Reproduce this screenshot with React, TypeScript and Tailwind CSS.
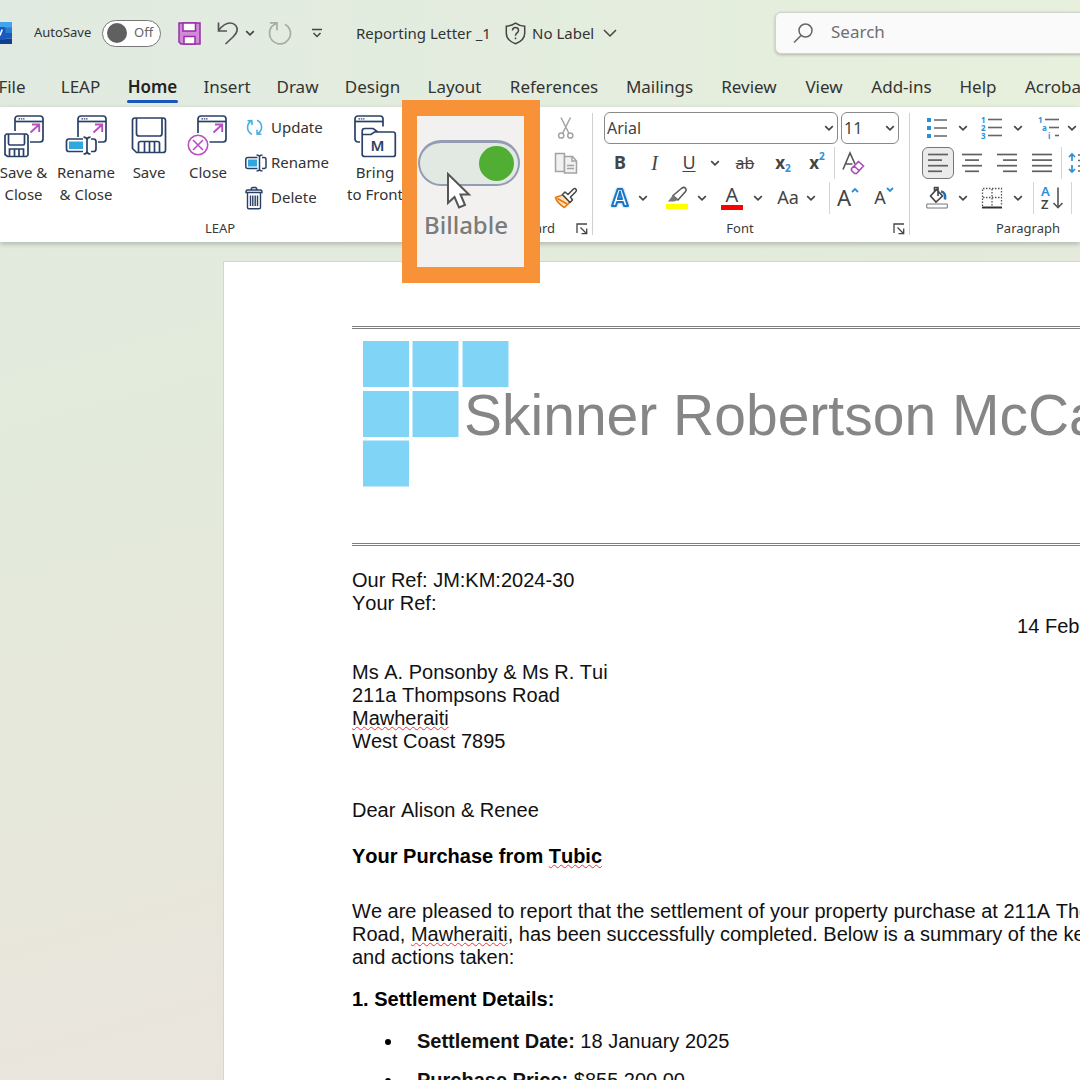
import type { ReactNode } from 'react';

// Ribbon tabs, in the order they are drawn
const tabs = [
  { name: 'LEAP', width: 'w-[41px]' },
  { name: 'Home', width: 'w-[51px]' },
  { name: 'Insert', width: 'w-[46px]' },
  { name: 'Draw', width: 'w-[43px]' },
  { name: 'Design', width: 'w-[55px]' },
  { name: 'Layout', width: 'w-[57px]' },
  { name: 'References', width: 'w-[90px]' },
  { name: 'Mailings', width: 'w-[69px]' },
  { name: 'Review', width: 'w-[58px]' },
  { name: 'View', width: 'w-[40px]' },
  { name: 'Add-ins', width: 'w-[63px]' },
  { name: 'Help', width: 'w-[38px]' },
  { name: 'Acrobat', width: 'w-[66px]' },
];

/* ---------- shared bits ---------- */

function Chevron({ size = 10 }: { size?: number }) {
  return (
    <svg width={size} height={size} viewBox="0 0 10 10" fill="none" stroke="#444" strokeWidth="1.7" className="pointer-events-none shrink-0">
      <path d="M1.2 3.2 5 6.8l3.8-3.6" />
    </svg>
  );
}

function Tool({ label, className = '', children }: { label: string; className?: string; children: ReactNode }) {
  return (
    <button aria-label={label} className={`flex h-8 shrink-0 items-center justify-center ${className}`}>
      {children}
    </button>
  );
}

function Row({ children }: { children: ReactNode }) {
  return <div className="flex h-[35px] items-center">{children}</div>;
}

function RowDivider({ className = '' }: { className?: string }) {
  return <span className={`h-8 w-px shrink-0 bg-[#d4d4d4] ${className}`} />;
}

function GroupDivider() {
  return <span className="mt-[3px] h-[122px] w-px shrink-0 bg-[#d0d0d0]" />;
}

function GroupLabel({ children, launcher = false }: { children: ReactNode; launcher?: boolean }) {
  return (
    <div className="flex h-[27px] items-center text-[13px] text-[#3a3a3a]">
      <span className={launcher ? 'grow pr-[6px] text-center' : 'grow text-center'}>{children}</span>
      {launcher && (
        <button aria-label={`${children} settings`} className="mr-1">
          <svg width="12" height="12" viewBox="0 0 12 12" fill="none" stroke="#444" strokeWidth="1.3">
            <path d="M1 10V1h10M4.500 4.500l6 6M10.700 5.500v5.200H5.500" />
          </svg>
        </button>
      )}
    </div>
  );
}

/* ---------- LEAP icons ---------- */

const NAVY = '#2b4066';
const PURPLE = '#b850c4';

function WindowShape({ x, arrow = true }: { x: number; arrow?: boolean }) {
  return (
    <g transform={`translate(${x} 0)`} fill="none" strokeWidth="1.7">
      <rect x="1" y="2" width="28" height="26" rx="3" stroke={NAVY} fill="#fff" />
      <path d="M1 7.500h28" stroke={NAVY} />
      <path d="M4.500 4.900h6" stroke={NAVY} strokeDasharray="1.500 .8" strokeWidth="1.300" />
      {arrow && <path d="M16.500 18.500 25 10.700M18 10.500h7.200v7.500" stroke={PURPLE} strokeWidth="1.900" />}
    </g>
  );
}

function SaveCloseIcon() {
  return (
    <svg width="42" height="44" viewBox="0 0 42 44">
      <WindowShape x={11} />
      <path d="M0 17h27v27H0z" fill="#fff" />
      <g fill="none" stroke={NAVY} strokeWidth="1.7">
        <path d="M3.500 20h20l1.500 1.500v19.500l-1.500 1.500h-19L2 40.500v-19z" />
        <path d="M5.500 20v9.500q0 1.500 1.500 1.500h13q1.500 0 1.500-1.500V20M6.500 42.500v-7.500h14v7.500M11.500 35v7M16 35v7" />
      </g>
    </svg>
  );
}

function RenameCloseIcon() {
  return (
    <svg width="42" height="44" viewBox="0 0 42 44">
      <WindowShape x={12} />
      <path d="M0 23h33v19H0z" fill="#fff" />
      <rect x="4" y="27.500" width="14" height="7.500" fill="#2fa8e0" />
      <g fill="none" stroke={NAVY} strokeWidth="1.7">
        <path d="M18 37.500H4q-2.500 0-2.500-2.500v-7.500Q1.500 25 4 25h14M26 25h2.500q2.500 0 2.500 2.500V35q0 2.500-2.500 2.500H26" />
        <path d="M18.500 23.200q3 0 3.500 2.300.5-2.300 3.500-2.300M22 25v13M18.500 40q3 0 3.500-2.300.5 2.300 3.500 2.300" />
      </g>
    </svg>
  );
}

function SaveIcon() {
  return (
    <svg width="36" height="44" viewBox="0 0 36 44" fill="none" stroke={NAVY} strokeWidth="1.700">
      <path d="M4 4h28q2.500 0 2.500 2.500v29.500q0 2.500-2.500 2.500H5.500L1.500 34.500V6.500Q1.500 4 4 4z" />
      <path d="M5.500 4v15.500q0 2.500 2.500 2.500h20.500q2.500 0 2.500-2.500V4M7.500 38V29.500q0-2 2-2h17q2 0 2 2V38M13.500 28v10M18.500 28v10M23.500 28v10" />
    </svg>
  );
}

function CloseIcon() {
  return (
    <svg width="42" height="44" viewBox="0 0 42 44">
      <WindowShape x={10} />
      <circle cx="11" cy="31" r="12" fill="#fff" />
      <g fill="none" stroke={PURPLE} strokeWidth="1.600">
        <circle cx="11" cy="31" r="9.700" />
        <path d="m6 26 10 10M16 26 6 36" />
      </g>
    </svg>
  );
}

function BringIcon() {
  return (
    <svg width="44" height="44" viewBox="0 0 44 44">
      <WindowShape x={1} arrow={false} />
      <path d="M7 12.500h26v5h11V44H7z" fill="#fff" />
      <path d="M9.200 17q0-2.500 2.500-2.500h8.500l4.500 3.500H40q2.300 0 2.300 2.300V40.500q0 2-2 2H11.500q-2.300 0-2.300-2.300zM9.500 20.500h8.500l3.500-2.500h4" fill="none" stroke={NAVY} strokeWidth="1.700" />
      <text x="24.500" y="37" textAnchor="middle" fontFamily="Noto Sans, sans-serif" fontSize="15" fontWeight="600" fill={NAVY}>M</text>
    </svg>
  );
}

function UpdateIcon() {
  return (
    <svg width="19" height="19" viewBox="0 0 19 19" fill="none" stroke="#45b0e3" strokeWidth="1.600">
      <path d="M7 16.200A7.300 7.300 0 0 1 6.500 3M2.500 2.800l4.300-.2.300 4.400" />
      <path d="M12 2.300a7.300 7.300 0 0 1 .5 13.300M16.500 16l-4.300.2-.3-4.400" />
    </svg>
  );
}

function RenameIcon() {
  return (
    <svg width="22" height="20" viewBox="0 0 22 20">
      <rect x="3" y="6.500" width="9" height="7" fill="#2fa8e0" />
      <path d="M12.500 15.500H3Q.8 15.500.8 13.500v-7Q.8 4.500 3 4.500h9.500M17 4.500h2q2 0 2 2v7q0 2-2 2h-2M11.500 2q2.500 0 3 1.500Q15 2 17.500 2M14.500 3.500v13M11.500 18q2.500 0 3-1.500.5 1.500 3 1.500" fill="none" stroke={NAVY} strokeWidth="1.500" />
    </svg>
  );
}

function DeleteIcon() {
  return (
    <svg width="20" height="24" viewBox="0 0 20 24" fill="none" stroke={NAVY} strokeWidth="1.400">
      <path d="M1 5.500q0-1.500 1.500-1.500h13Q17 4 17 5.500v1H1zM6 4q0-2 1.500-2.500h3Q12 2 12 4M2.500 7v14.500q0 1.200 1.500 1.200h10q1.500 0 1.500-1.200V7" />
      <path d="M5.500 9.500v10.500M7.800 9.500v10.500M10.200 9.500v10.500M12.500 9.500v10.500" />
    </svg>
  );
}

/* ---------- title bar ---------- */

function TitleBar() {
  return (
    <div className="flex h-[66px] items-center text-[#333]">
      <svg width="12" height="22" viewBox="0 0 12 22" className="shrink-0">
        <path d="M0 0h12v6H0z" fill="#41a5ee" />
        <path d="M0 5.500h12v6H0z" fill="#2b7cd3" />
        <path d="M0 11h12v5.500H0z" fill="#185abd" />
        <path d="M0 16.500h12V22H0z" fill="#103f91" />
        <path d="M0 5h4q1.500 0 1.500 1.500v10Q5.500 18 4 18H0z" fill="#185abd" />
        <path d="M0 13.500 2.200 7.500" stroke="#fff" strokeWidth="1.500" />
      </svg>

      <label className="ml-[22px] flex shrink-0 items-center text-[13px]">
        <span className="w-[68px]">AutoSave</span>
        <input type="checkbox" role="switch" className="sr-only" />
        <span className="flex h-[27px] w-[59px] items-center gap-[7px] rounded-full border border-[#777] bg-white pl-1 text-[#666]">
          <span className="size-5 rounded-full bg-[#606060]" />
          Off
        </span>
      </label>

      <button aria-label="Save" className="ml-4 shrink-0">
        <svg width="24" height="24" viewBox="0 0 24 24" stroke="#962ea6" strokeWidth="1.500">
          <path d="M2 2h21v21H4l-2-2z" fill="#d08ad8" />
          <path d="M6 2h12.500v8H6zM7 23v-7.500h11V23z" fill="#fff" />
        </svg>
      </button>
      <button aria-label="Undo" className="ml-4 shrink-0">
        <svg width="22" height="24" viewBox="0 0 22 24" fill="none" stroke="#555" strokeWidth="1.700">
          <path d="M1.500 1.500v8.500h8.500M1.500 9.500C5 5 8.500 2 13 2c5 0 8 4 7 8-.5 2.500-2 4-4 6l-7.500 7" />
        </svg>
      </button>
      <button aria-label="Undo history" className="ml-[6px] shrink-0"><Chevron /></button>
      <button aria-label="Redo" className="ml-[13px] shrink-0">
        <svg width="24" height="24" viewBox="0 0 24 24" fill="none" stroke="#a6ada4" strokeWidth="1.700">
          <path d="M2 1.800h7v7.500M9 2.500C3.500 4 1.500 8 1.500 12.500a10.500 10.500 0 1 0 15.500-9.300" />
        </svg>
      </button>
      <button aria-label="Customise toolbar" className="ml-[19px] shrink-0">
        <svg width="12" height="12" viewBox="0 0 12 12" fill="none" stroke="#444" strokeWidth="1.500">
          <path d="M1 2.500h10M2.500 6l3.500 3.500L9.500 6" />
        </svg>
      </button>

      <span className="ml-[33px] w-[149px] shrink-0 whitespace-nowrap text-[15px]">Reporting Letter _1</span>
      <button className="flex shrink-0 items-center whitespace-nowrap text-[15px]">
        <svg width="21" height="23" viewBox="0 0 21 23" fill="none" stroke="#444" strokeWidth="1.500">
          <path d="M10.500 1.200Q14.500 4 19.700 4.200v7q0 7-9.200 10.600Q1.300 18.200 1.300 11.200v-7Q6.500 4 10.500 1.200z" />
          <path d="M7.500 8.500c0-4 6-4 6 0 0 2.500-3 2.300-3 5.200M10.500 15.500v1.800" />
        </svg>
        <span className="ml-[6px] w-[71px] text-left">No Label</span>
        <svg width="14" height="14" viewBox="0 0 14 14" fill="none" stroke="#444" strokeWidth="1.500">
          <path d="m1 4 6 6 6-6" />
        </svg>
      </button>

      <label className="ml-[158px] flex h-[42px] min-w-[420px] grow items-center rounded-md border border-[#cfd5cb] bg-[#fafafa] pl-[17px] shadow-[0_1px_3px_rgba(0,0,0,0.25)]">
        <svg width="20" height="20" viewBox="0 0 20 20" fill="none" stroke="#666" strokeWidth="1.500">
          <circle cx="12.500" cy="7.500" r="6.500" />
          <path d="M8 12.500 1 19.500" />
        </svg>
        <input type="text" aria-label="Search" placeholder="Search" className="ml-[18px] w-60 bg-transparent pb-[2px] text-[17px] outline-none placeholder:text-[#6f6f6f]" />
      </label>
    </div>
  );
}

function TabBar() {
  return (
    <nav className="-ml-px flex h-[41px] gap-[26px] text-[17px] leading-[24px] text-[#333]">
      <button className="mr-[9px] flex w-[26px] shrink-0 justify-center pt-[9px]">File</button>
      {tabs.map((tab) => (
        <button key={tab.name} className={`flex shrink-0 flex-col items-center whitespace-nowrap pt-[9px] ${tab.width}`}>
          {tab.name === 'Home' ? <span className="font-semibold text-[#222]">{tab.name}</span> : tab.name}
          {tab.name === 'Home' && <span className="mt-px h-[3px] w-full rounded-full bg-[#1857b8]" />}
        </button>
      ))}
    </nav>
  );
}

/* ---------- ribbon groups ---------- */

function BigButton({ icon, lines, className }: { icon: ReactNode; lines: string[]; className: string }) {
  return (
    <button className={`flex shrink-0 flex-col items-center pt-1 ${className}`}>
      {icon}
      <span className="mt-[3px] flex flex-col whitespace-nowrap leading-[22px]">
        {lines.map((line) => (
          <span key={line}>{line}</span>
        ))}
      </span>
    </button>
  );
}

function SmallButton({ icon, label }: { icon: ReactNode; label: string }) {
  return (
    <button className="flex h-[35px] items-center">
      <span className="flex w-[26px]">{icon}</span>
      {label}
    </button>
  );
}

function LeapGroup() {
  return (
    <section className="-ml-[7px] w-[454px] shrink-0 text-[15px] text-[#333]">
      <div className="flex h-[105px] items-start">
        <BigButton icon={<SaveCloseIcon />} lines={['Save &', 'Close']} className="w-[61px]" />
        <BigButton icon={<RenameCloseIcon />} lines={['Rename', '& Close']} className="w-16" />
        <BigButton icon={<SaveIcon />} lines={['Save']} className="w-[62px]" />
        <BigButton icon={<CloseIcon />} lines={['Close']} className="w-14" />
        <div className="ml-[9px] w-[95px]">
          <SmallButton icon={<UpdateIcon />} label="Update" />
          <SmallButton icon={<RenameIcon />} label="Rename" />
          <SmallButton icon={<DeleteIcon />} label="Delete" />
        </div>
        <BigButton icon={<BringIcon />} lines={['Bring', 'to Front']} className="w-[70px]" />
      </div>
      <GroupLabel>LEAP</GroupLabel>
    </section>
  );
}

function ClipboardGroup() {
  return (
    <section className="w-[145px] shrink-0">
      <div className="flex justify-end pr-[10px]">
        {/* Right edge of the paste button */}
        <span className="mr-[13px] mt-6 h-[25px] w-5 border-r-2 border-[#c4c4c4]" />
        <div className="flex flex-col">
          <Row>
            <Tool label="Cut" className="w-8">
              <svg width="18" height="24" viewBox="0 0 18 24" fill="none" stroke="#a3a3a3" strokeWidth="1.500">
                <path d="M4 1.500 12 17.500M13.500 1.500l-8 16" />
                <circle cx="4.200" cy="19.500" r="2.600" />
                <circle cx="13.300" cy="19.500" r="2.600" />
              </svg>
            </Tool>
          </Row>
          <Row>
            <Tool label="Copy" className="w-8">
              <svg width="24" height="24" viewBox="0 0 24 24" fill="#f1f1f1" stroke="#a3a3a3" strokeWidth="1.500">
                <path d="M1.500 2.500h9v18h-9z" />
                <path d="M10.500 5.500h8l4 4.500v12h-12zM18 5.500V10h4.500M13 14.500h7M13 17.500h7" />
              </svg>
            </Tool>
          </Row>
          <Row>
            <Tool label="Format painter" className="w-8">
              <svg width="24" height="22" viewBox="0 0 24 22" strokeLinejoin="round">
                <path d="M8.500 8 1.500 10.500Q3 16 10.500 20.500L16 15z" fill="#fde3bd" stroke="#e8760a" strokeWidth="1.600" />
                <path d="M3.500 11.500 13 17" stroke="#e8760a" strokeWidth="1.600" />
                <path d="M8.500 7.500 11 5l3 2.500 5.500-5.500q1.500-1 2.500.2 1 1.300-.2 2.500L16.500 10l2 3-2.500 2.500z" fill="#fff" stroke="#444" strokeWidth="1.500" />
              </svg>
            </Tool>
          </Row>
        </div>
      </div>
      <div className="pl-[34px]">
        <GroupLabel launcher>Clipboard</GroupLabel>
      </div>
    </section>
  );
}

function FontGroup() {
  return (
    <section className="w-[316px] shrink-0 text-[#444]">
      <div className="pl-[11px]">
        <Row>
          <span className="flex w-[234px] items-center">
            <select aria-label="Font name" className="h-8 w-full appearance-none rounded-md border border-[#8a8a8a] bg-white pl-[2px] text-[16px]">
              <option>Arial</option>
            </select>
            <span className="-ml-[14px]"><Chevron /></span>
          </span>
          <span className="ml-[3px] flex w-[58px] items-center">
            <select aria-label="Font size" className="h-8 w-full appearance-none rounded-md border border-[#8a8a8a] bg-white pl-[2px] text-[16px]">
              <option>11</option>
            </select>
            <span className="-ml-[14px]"><Chevron /></span>
          </span>
        </Row>
        <Row>
          <Tool label="Bold" className="w-8 text-[18px] font-bold">B</Tool>
          <Tool label="Italic" className="w-[37px] font-['Liberation_Serif',serif] text-[20px] italic">I</Tool>
          <Tool label="Underline" className="w-8 text-[18px] underline underline-offset-2">U</Tool>
          <Tool label="Underline style" className="w-5"><Chevron /></Tool>
          <Tool label="Strikethrough" className="w-10 text-[16px] line-through">ab</Tool>
          <Tool label="Subscript" className="w-9 text-[17px] font-bold">
            x<span className="mt-3 text-[10px] text-[#2b8fd6]">2</span>
          </Tool>
          <Tool label="Superscript" className="w-8 text-[17px] font-bold">
            x<span className="mb-3 text-[10px] text-[#2b8fd6]">2</span>
          </Tool>
          <RowDivider className="ml-px" />
          <Tool label="Clear formatting" className="w-9">
            <svg width="24" height="24" viewBox="0 0 24 24" fill="none" strokeWidth="1.600">
              <path d="M2 18.500 9 2l5 11M4.500 13h7" stroke="#555" />
              <path d="m10.500 17.500 7-7 5 4.500-7 7.500h-2l-3-3zM13 15l5 4.500" stroke="#a94bb5" />
            </svg>
          </Tool>
        </Row>
        <Row>
          <Tool label="Text effects" className="ml-[3px] w-[26px]">
            <svg width="24" height="24" viewBox="0 0 24 24" strokeLinejoin="round" className="overflow-visible drop-shadow-[0_0_1px_#5fb2ea]">
              <text x="12" y="20" textAnchor="middle" fontFamily="Noto Sans, sans-serif" fontSize="23" fontWeight="700" fill="#fff" stroke="#1b75c4" strokeWidth="2">A</text>
            </svg>
          </Tool>
          <Tool label="Text effects menu" className="w-5"><Chevron /></Tool>
          <Tool label="Highlight" className="ml-[10px] w-7">
            <svg width="22" height="24" viewBox="0 0 22 24">
              <path d="M7 9.500 16 2q2-1.300 3.500.2 1.300 1.500 0 3.300L12 14z" fill="#fff" stroke="#555" strokeWidth="1.500" />
              <path d="m7 9 5 5-4 1.500H2z" fill="#777" />
              <path d="M0 18h22v5H0z" fill="#ff0" />
            </svg>
          </Tool>
          <Tool label="Highlight colour" className="w-[22px]"><Chevron /></Tool>
          <Tool label="Font colour" className="ml-[5px] w-7 flex-col">
            <span className="text-[20px] leading-[18px]">A</span>
            <span className="mt-px h-[5px] w-[22px] bg-[#f00]" />
          </Tool>
          <Tool label="Font colour menu" className="w-6"><Chevron /></Tool>
          <Tool label="Change case" className="w-9 text-[18px]">Aa</Tool>
          <Tool label="Change case menu" className="w-[10px]"><Chevron /></Tool>
          <RowDivider className="ml-[13px]" />
          <Tool label="Grow font" className="w-9 text-[22px]">
            A
            <svg width="8" height="6" viewBox="0 0 8 6" fill="none" stroke="#2b8fd6" strokeWidth="1.800" className="mb-4">
              <path d="M1 5l3-3 3 3" />
            </svg>
          </Tool>
          <Tool label="Shrink font" className="w-9 text-[18px]">
            A
            <svg width="8" height="6" viewBox="0 0 8 6" fill="none" stroke="#2b8fd6" strokeWidth="1.800" className="mb-4">
              <path d="M1 1l3 3 3-3" />
            </svg>
          </Tool>
        </Row>
      </div>
      <GroupLabel launcher>Font</GroupLabel>
    </section>
  );
}

// Four stacked rules; each entry is [start, end] inside a 20px box
function AlignIcon({ lines }: { lines: number[][] }) {
  return (
    <svg width="20" height="20" viewBox="0 0 20 20" stroke="#606060" strokeWidth="1.700">
      {lines.map(([from, to], i) => (
        <path key={i} d={`M${from} ${1.5 + i * 5.6}H${to}`} />
      ))}
    </svg>
  );
}

function ListIcon({ marks }: { marks: { x: number; text: string }[] }) {
  return (
    <svg width="22" height="24" viewBox="0 0 22 24" fontFamily="Noto Sans, sans-serif" fontSize="8" fontWeight="700" fill="#2b8fd6" className="overflow-visible">
      {marks.map((mark, i) => (
        <g key={mark.text}>
          <text x={mark.x} y={6.5 + i * 8}>{mark.text}</text>
          <path d={`M${mark.x + 7} ${3.5 + i * 8}H21`} stroke="#666" strokeWidth="1.600" />
        </g>
      ))}
    </svg>
  );
}

function ParagraphGroup() {
  return (
    <section className="w-[224px] shrink-0 pl-3">
      <Row>
        <Tool label="Bullets" className="w-[30px]">
          <svg width="22" height="24" viewBox="0 0 22 24">
            <path d="M1 2h4v4H1zM1 10h4v4H1zM1 18h4v4H1z" fill="#2b8fd6" />
            <path d="M8 4h13M8 12h13M8 20h13" stroke="#666" strokeWidth="1.600" />
          </svg>
        </Tool>
        <Tool label="Bullet styles" className="w-[22px]"><Chevron /></Tool>
        <Tool label="Numbering" className="w-9">
          <ListIcon marks={[{ x: 0, text: '1' }, { x: 0, text: '2' }, { x: 0, text: '3' }]} />
        </Tool>
        <Tool label="Numbering styles" className="w-4"><Chevron /></Tool>
        <Tool label="Multilevel list" className="ml-[5px] w-9">
          <ListIcon marks={[{ x: 0, text: '1' }, { x: 4, text: 'a' }, { x: 10, text: 'i' }]} />
        </Tool>
        <Tool label="Multilevel styles" className="w-[10px]"><Chevron /></Tool>
      </Row>
      <Row>
        <Tool label="Align left" className="w-8 rounded-md border border-[#777] bg-[#ebebeb]">
          <AlignIcon lines={[[0, 20], [0, 14], [0, 20], [0, 14]]} />
        </Tool>
        <Tool label="Centre" className="w-9">
          <AlignIcon lines={[[0, 20], [3, 17], [0, 20], [3, 17]]} />
        </Tool>
        <Tool label="Align right" className="w-[34px]">
          <AlignIcon lines={[[0, 20], [6, 20], [0, 20], [6, 20]]} />
        </Tool>
        <Tool label="Justify" className="w-9">
          <AlignIcon lines={[[0, 20], [0, 20], [0, 20], [0, 20]]} />
        </Tool>
        <RowDivider className="ml-px" />
        <Tool label="Line spacing" className="w-9">
          <svg width="24" height="22" viewBox="0 0 24 22" fill="none" strokeWidth="1.700">
            <path d="M4 2v7M1 5l3-3 3 3M4 20v-7M1 17l3 3 3-3" stroke="#2b8fd6" />
            <path d="M10 3h13M10 8.500h13M10 14h13M10 19h13" stroke="#666" />
          </svg>
        </Tool>
      </Row>
      <Row>
        <Tool label="Shading" className="w-[30px]">
          <svg width="22" height="24" viewBox="0 0 22 24" fill="none" strokeWidth="1.600">
            <path d="m4.500 10 6-6.500 6 6.500-6.500 6zM8.500 6V1.500h3.500V10" stroke="#444" />
            <path d="M15 5.500q5 .5 4 8" stroke="#1f6fb5" strokeWidth="2.500" />
            <path d="M.8 18h20.500v4H.8z" stroke="#777" strokeWidth="1" fill="#fff" />
          </svg>
        </Tool>
        <Tool label="Shading colour" className="w-[22px]"><Chevron /></Tool>
        <Tool label="Borders" className="w-9">
          <svg width="22" height="22" viewBox="0 0 22 22" fill="none" stroke="#555">
            <path d="M1.500 19V1.500h19V19M11 2v17M2 10.500h18.500" strokeWidth="1.300" strokeDasharray="1.500 1.500" />
            <path d="M1 20.500h20" strokeWidth="2" stroke="#333" />
          </svg>
        </Tool>
        <Tool label="Border styles" className="w-4"><Chevron /></Tool>
        <RowDivider className="ml-[7px]" />
        <Tool label="Sort" className="w-9">
          <svg width="24" height="24" viewBox="0 0 24 24" fontFamily="Noto Sans, sans-serif" fontSize="13" fontWeight="600" className="overflow-visible">
            <text x="1" y="10">
              <tspan fill="#2b8fd6">A</tspan>
              <tspan x="1" y="23" fill="#444">Z</tspan>
            </text>
            <path d="M18 1.500v20M13.500 17l4.500 4.500L22.500 17" fill="none" stroke="#555" strokeWidth="1.600" />
          </svg>
        </Tool>
        <RowDivider className="ml-px" />
      </Row>
      <GroupLabel>Paragraph</GroupLabel>
    </section>
  );
}

// Enlarged Billable switch that sits over the ribbon
function BillableCallout() {
  return (
    <div className="absolute left-[402px] top-[100px] z-10 h-[183px] w-[138px] border-[16px] border-l-[15px] border-[#f79239] bg-[#f2f1ef]">
      <label className="flex flex-col pt-6">
        <input type="checkbox" role="switch" defaultChecked className="sr-only" />
        <span className="ml-px flex h-[46px] w-[102px] items-center justify-end rounded-full border-2 border-t-[3px] border-[#949cb4] bg-[#e2e9e3] pr-1">
          <span className="size-[35px] rounded-full bg-[#4fae33]" />
        </span>
        <span className="mt-[23px] pl-[7px] text-[24px] font-medium leading-[32px] text-[#7b7b7b]">Billable</span>
      </label>
      <svg width="26" height="38" viewBox="0 0 26 38" className="absolute left-[29px] top-14">
        <path d="M2 2v29l6.500-6 4.500 10.500 6-2.500-4.500-10.500H23z" fill="#fff" stroke="#555" strokeWidth="2" />
      </svg>
    </div>
  );
}

/* ---------- document ---------- */

function Misspelt({ children }: { children: ReactNode }) {
  return (
    <span className="underline decoration-red-500 decoration-wavy decoration-1 underline-offset-1 [text-decoration-skip-ink:none]">
      {children}
    </span>
  );
}

function Letterhead() {
  return (
    <div className="flex items-start border-y-[3px] border-double border-[#7f7f7f] pb-14 pl-[11px] pt-3">
      <svg width="146" height="146" viewBox="0 0 146 146" fill="#80d5f7" className="shrink-0">
        <path d="M0 0h46v46H0zM49.500 0h46v46h-46zM99.500 0h46v46h-46zM0 50h46v46H0zM49.500 50h46v46h-46zM0 99.500h46v46H0z" />
      </svg>
      <span className="-ml-[45px] mt-[42px] whitespace-nowrap text-[57px] leading-[64px] text-[#868686]">Skinner Robertson McCa</span>
    </div>
  );
}

function Letter() {
  return (
    <article className="ml-[223px] mt-[19px] w-[1081px] border border-[#d3d6d1] bg-white px-32 pb-20 pt-16 font-['Liberation_Sans',Arial,sans-serif] text-[20px] leading-[23px] text-[#111] [font-kerning:none]">
      <Letterhead />
      <div className="mt-[23px]">
        <p>Our Ref: JM:KM:2024-30</p>
        <p>Your Ref:</p>
        <p className="text-right">14 February 2025</p>
      </div>
      <address className="mt-[23px] not-italic">
        Ms A. Ponsonby &amp; Ms R. Tui<br />
        211a Thompsons Road<br />
        <Misspelt>Mawheraiti</Misspelt><br />
        West Coast 7895
      </address>
      <p className="mt-[46px]">Dear Alison &amp; Renee</p>
      <h1 className="mt-[23px] font-bold text-black">
        Your Purchase from <Misspelt>Tubic</Misspelt>
      </h1>
      <p className="mt-8">
        We are pleased to report that the settlement of your property purchase at 211A Thompsons Road, <Misspelt>Mawheraiti</Misspelt>, has
        been successfully completed. Below is a summary of the key details and actions taken:
      </p>
      <h2 className="mt-[19px] font-bold text-black">1. Settlement Details:</h2>
      <ul className="mt-[19px] flex flex-col gap-4 pl-[33px]">
        <li className="flex items-center gap-[26px]">
          <span className="size-[6px] rounded-full bg-black" />
          <span><strong>Settlement Date:</strong> 18 January 2025</span>
        </li>
        <li className="flex items-center gap-[26px]">
          <span className="size-[6px] rounded-full bg-black" />
          <span><strong>Purchase Price:</strong> $855,200.00</span>
        </li>
      </ul>
    </article>
  );
}

export default function App() {
  return (
    <div className="h-screen overflow-hidden bg-[linear-gradient(165deg,#e0eae0_0%,#e2ebdc_30%,#e7e7db_62%,#eae4dd_85%,#e6e6da_100%)] font-['Noto_Sans',sans-serif]">
      <header className="relative bg-linear-to-r from-[#e0eae0] to-[#e7f0dc]">
        <TitleBar />
        <TabBar />
        <div className="flex h-[135px] bg-white pt-[3px] shadow-[0_2px_5px_rgba(0,0,0,0.22)]">
          <LeapGroup />
          <ClipboardGroup />
          <GroupDivider />
          <FontGroup />
          <GroupDivider />
          <ParagraphGroup />
        </div>
        <BillableCallout />
      </header>
      <main>
        <Letter />
      </main>
    </div>
  );
}
